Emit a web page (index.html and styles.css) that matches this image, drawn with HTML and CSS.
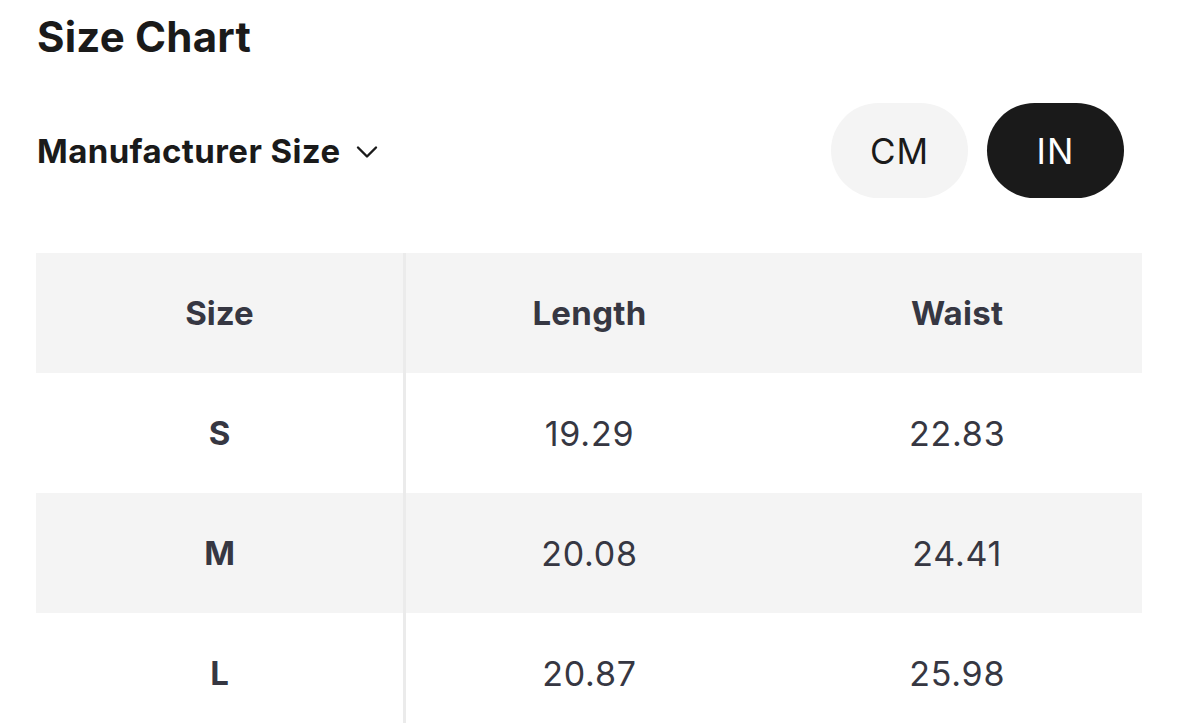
FILE: index.html
```html
<!DOCTYPE html>
<html>
<head>
<meta charset="utf-8">
<link rel="stylesheet" href="styles.css">
</head>
<body>
<div class="page">
  <h1 class="title">Size Chart</h1>
  <div class="toolbar">
    <button class="size-select">Manufacturer Size
      <svg class="chev" width="22" height="14" viewBox="0 0 22 14"><path d="M2 2.5 L11 11.5 L20 2.5" fill="none" stroke="#1a1a1a" stroke-width="2.4" stroke-linecap="round" stroke-linejoin="round"/></svg>
    </button>
    <div class="units">
      <button class="pill">CM</button>
      <button class="pill active">IN</button>
    </div>
  </div>
  <table class="chart">
    <thead>
      <tr><th class="first">Size</th><th>Length</th><th>Waist</th></tr>
    </thead>
    <tbody>
      <tr><td class="first">S</td><td>19.29</td><td>22.83</td></tr>
      <tr class="alt"><td class="first">M</td><td>20.08</td><td>24.41</td></tr>
      <tr><td class="first">L</td><td>20.87</td><td>25.98</td></tr>
    </tbody>
  </table>
</div>
</body>
</html>
```
FILE: styles.css
```css
* { box-sizing: border-box; }
html, body { margin: 0; background: #fff; }
body { font-family: Inter, Lato, "Noto Sans", sans-serif; color: #1a1a1a; overflow: hidden; }
.page { padding: 12px 36px 0 36px; }
.title { margin: 0 0 0 1px; font-size: 42px; font-weight: 700; line-height: 50px; color: #1a1a1a; letter-spacing: 0.2px; }
.toolbar { display: flex; align-items: center; justify-content: space-between; margin-top: 41px; padding-right: 19px; }
.size-select { display: flex; align-items: center; gap: 16px; background: none; border: 0; padding: 0 0 0 1px; font-family: inherit; font-size: 33px; font-weight: 700; color: #1a1a1a; letter-spacing: 0.4px; }
.chev { margin-top: 2px; }
.units { display: flex; gap: 19px; }
.pill { width: 137px; height: 95px; border-radius: 48px; border: 0; background: #f4f4f4; color: #1a1a1a; font-family: inherit; font-size: 35px; font-weight: 400; letter-spacing: 1px; }
.pill.active { background: #1a1a1a; color: #fff; }
.chart { margin-top: 55px; width: 100%; border-collapse: collapse; table-layout: fixed; }
.chart th, .chart td { height: 120px; text-align: center; color: #363742; padding: 0; }
.chart th { font-weight: 700; font-size: 33px; letter-spacing: 0.3px; }
.chart td { font-weight: 400; font-size: 34px; letter-spacing: 0.8px; }
.chart thead tr, .chart tr.alt { background: #f4f4f4; }
.chart .first { border-right: 3px solid #ebebeb; font-weight: 700; font-size: 33px; letter-spacing: 0; }
```
